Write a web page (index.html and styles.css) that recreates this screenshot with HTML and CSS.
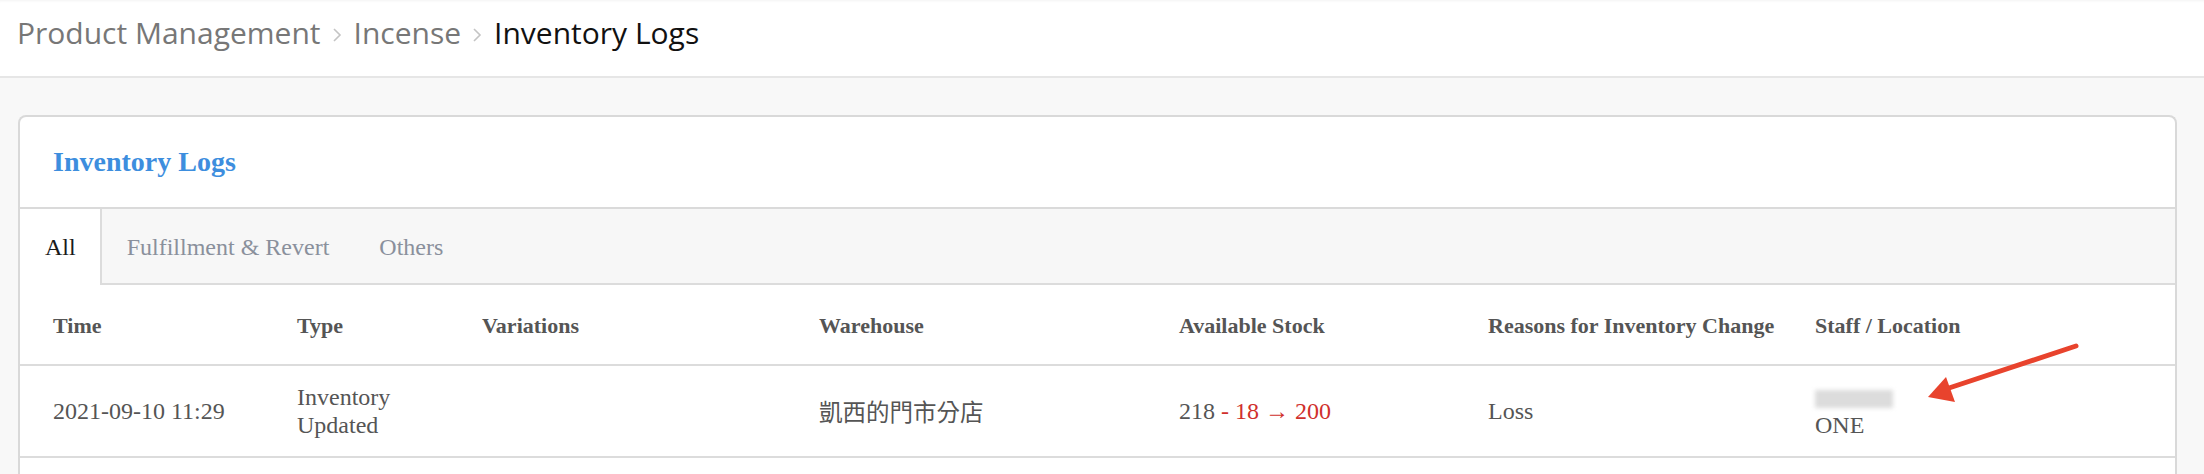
FILE: index.html
```html
<!DOCTYPE html>
<html>
<head>
    <meta charset="utf-8">
    <title>Inventory Logs</title>
    <link rel="stylesheet" href="styles.css">
</head>
<body>
    <div class="top-bar">
        <span class="crumb">Product Management</span>
        <svg class="crumb-sep" width="10" height="16" viewBox="0 0 10 16"><path d="M2 2 L8 8 L2 14" fill="none" stroke="#c4c4c4" stroke-width="1.6"/></svg>
        <span class="crumb">Incense</span>
        <svg class="crumb-sep" width="10" height="16" viewBox="0 0 10 16"><path d="M2 2 L8 8 L2 14" fill="none" stroke="#c4c4c4" stroke-width="1.6"/></svg>
        <span class="crumb current">Inventory Logs</span>
    </div>

    <div class="page">
        <div class="card">
            <div class="card-title">Inventory Logs</div>

            <div class="tab-bar">
                <div class="tab active">All</div>
                <div class="tab">Fulfillment &amp; Revert</div>
                <div class="tab">Others</div>
            </div>

            <table class="log-table">
                <colgroup>
                    <col class="c-time">
                    <col class="c-type">
                    <col class="c-var">
                    <col class="c-wh">
                    <col class="c-stock">
                    <col class="c-reason">
                    <col class="c-staff">
                </colgroup>
                <thead>
                    <tr>
                        <th>Time</th>
                        <th>Type</th>
                        <th>Variations</th>
                        <th>Warehouse</th>
                        <th>Available Stock</th>
                        <th>Reasons for Inventory Change</th>
                        <th>Staff / Location</th>
                    </tr>
                </thead>
                <tbody>
                    <tr>
                        <td>2021-09-10 11:29</td>
                        <td>Inventory<br>Updated</td>
                        <td></td>
                        <td class="cjk">凱西的門市分店</td>
                        <td>218 <span class="delta">- 18 &rarr; 200</span></td>
                        <td>Loss</td>
                        <td>
                            <span class="blurred"></span><br>
                            ONE
                        </td>
                    </tr>
                </tbody>
            </table>
            <div class="card-rest"></div>
        </div>
    </div>

    <!-- annotation arrow -->
    <svg class="note-arrow" width="2204" height="474" viewBox="0 0 2204 474">
        <line x1="2076" y1="346" x2="1946" y2="389" stroke="#e8432d" stroke-width="5" stroke-linecap="round"/>
        <polygon points="1928,397 1946,377 1955,402" fill="#e8432d"/>
    </svg>
</body>
</html>
```

FILE: styles.css
```css
* {
    box-sizing: border-box;
}
body {
    margin: 0;
    background: #f8f8f8;
    font-family: "Liberation Serif", "Times New Roman", serif;
    overflow: hidden;
}
.top-bar {
    height: 78px;
    background: #fff;
    border-bottom: 2px solid #e6e6e6;
    box-shadow: inset 0 3px 3px -2px rgba(0, 0, 0, 0.05);
    padding: 12px 17px 0;
    display: flex;
    align-items: flex-start;
    font-family: "Open Sans", sans-serif;
    font-size: 30px;
    line-height: 41px;
}
.crumb { color: #777; }
.crumb.current { color: #111; }
.crumb-sep {
    margin: 15px 12px 0 11px;
}
.page {
    padding: 37px 27px 0 18px;
}
.card {
    background: #fff;
    border: 2px solid #d9d9d9;
    border-bottom: none;
    border-radius: 8px 8px 0 0;
}
.card-title {
    height: 92px;
    padding-left: 33px;
    display: flex;
    align-items: center;
    font-size: 28px;
    font-weight: bold;
    color: #3d8ede;
    border-bottom: 2px solid #dadada;
}
.tab-bar {
    height: 76px;
    background: #f7f7f7;
    border-bottom: 2px solid #dcdcdc;
    display: flex;
}
.tab {
    height: 76px;
    padding: 0 25px;
    display: flex;
    align-items: center;
    font-size: 24px;
    color: #8a909c;
}
.tab.active {
    background: #fff;
    color: #1a1a1a;
    border-right: 2px solid #dcdcdc;
    padding: 0 24px 0 25px;
}
.log-table {
    width: 100%;
    border-collapse: collapse;
    table-layout: fixed;
    color: #555;
}
.c-time { width: 277px; }
.c-type { width: 185px; }
.c-var { width: 337px; }
.c-wh { width: 360px; }
.c-stock { width: 309px; }
.c-reason { width: 327px; }
.log-table th,
.log-table td {
    text-align: left;
    padding: 0 12px 0 0;
    vertical-align: middle;
    border-bottom: 2px solid #dcdcdc;
}
.log-table th:first-child,
.log-table td:first-child {
    padding-left: 33px;
}
.log-table th {
    height: 80px;
    padding-top: 2px;
    font-size: 22px;
    font-weight: bold;
}
.log-table td {
    height: 92px;
    font-size: 24px;
    line-height: 28px;
}
.log-table td.cjk {
    font-family: "Noto Sans CJK TC", sans-serif;
    font-size: 23.5px;
    color: #555;
}
.delta { color: #d0302c; }
.blurred {
    display: inline-block;
    width: 78px;
    height: 18px;
    vertical-align: middle;
    background: #dcdcdc;
    filter: blur(2px);
}
.card-rest {
    height: 40px;
}
.note-arrow {
    position: absolute;
    top: 0;
    left: 0;
    pointer-events: none;
}
```
